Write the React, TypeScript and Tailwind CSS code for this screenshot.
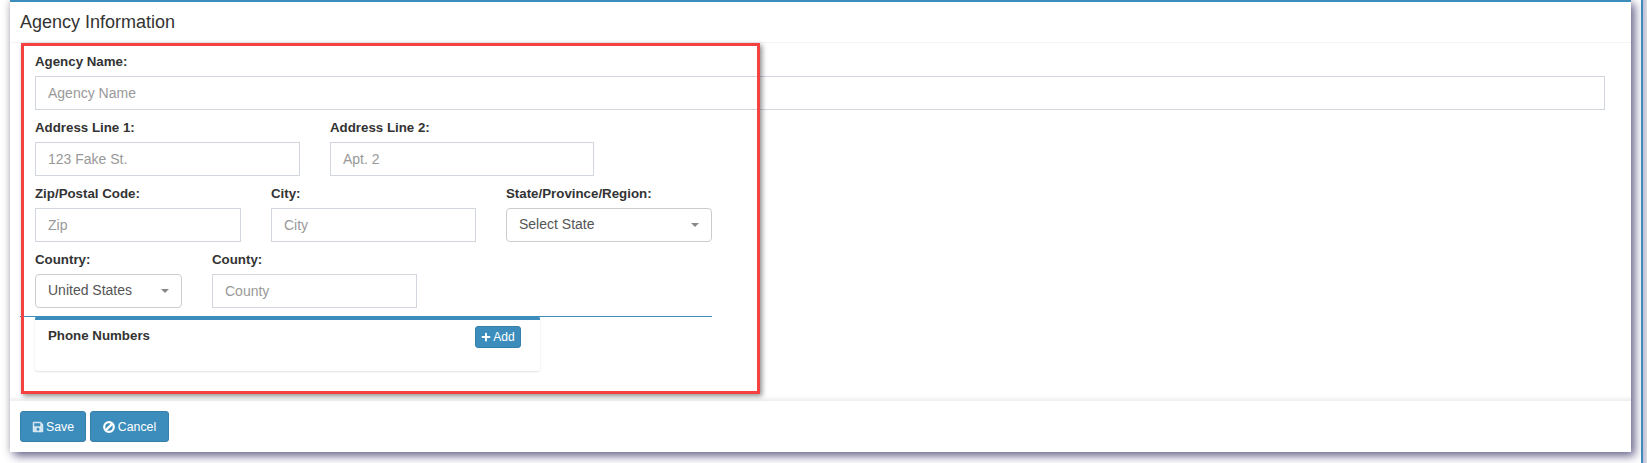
import React from 'react'
import { FaPlus, FaSave } from 'react-icons/fa'

function BanIcon() {
  return (
    <svg viewBox="0 0 12 12" className="size-[12px]" fill="none" stroke="currentColor" strokeWidth="2.2">
      <circle cx="6" cy="6" r="4.8" />
      <path d="M2.6 9.4 9.4 2.6" />
    </svg>
  )
}

function Field({ label, placeholder, className }: { label: string; placeholder: string; className: string }) {
  return (
    <div className={className}>
      <label className="block h-[31px] text-[13.3px] leading-[20px] pt-[7px] font-bold text-[#333]">{label}</label>
      <input
        placeholder={placeholder}
        className="block w-full h-[34px] px-[12px] border border-[#d2d6de] bg-white text-[14px] text-[#555] placeholder:text-[#999] outline-none"
      />
    </div>
  )
}

function SelectField({ label, value, className }: { label: string; value: string; className: string }) {
  return (
    <div className={className}>
      <label className="block h-[31px] text-[13.3px] leading-[20px] pt-[7px] font-bold text-[#333]">{label}</label>
      <div className="flex items-center justify-between h-[34px] pl-[12px] pr-[12px] border border-[#ccc] rounded-[4px] bg-white text-[14px] leading-[30px] text-[#555]">
        <span className="-mt-[2px]">{value}</span>
        <span className="w-0 h-0 border-x-[4px] border-x-transparent border-t-[4px] border-t-[#888]" />
      </div>
    </div>
  )
}

export default function App() {
  return (
    <div className="flex h-[463px] w-full overflow-hidden bg-white font-['Liberation_Sans',Arial,sans-serif]">
      <div className="relative ml-[10px] flex h-[452px] w-[1621px] shrink-0 flex-col border-t-2 border-[#3c8dbc] bg-white shadow-[4px_4px_9px_rgba(75,70,120,0.8),-1px_0_7px_rgba(0,0,0,0.15)]">
        <div className="h-[41px] shrink-0 border-b border-[#f4f4f4] pl-[10px] pt-[8px] text-[18px] leading-[24px] text-[#333]">
          Agency Information
        </div>

        <div className="h-[357px] shrink-0 pl-[25px] pr-[26px] shadow-[inset_0_-5px_5px_-5px_rgba(0,0,0,0.12)]">
          <Field label="Agency Name:" placeholder="Agency Name" className="mt-[2px]" />
          <div className="mt-[1px] flex gap-[30px]">
            <Field label="Address Line 1:" placeholder="123 Fake St." className="w-[265px]" />
            <Field label="Address Line 2:" placeholder="Apt. 2" className="w-[264px]" />
          </div>
          <div className="mt-[1px] flex gap-[30px]">
            <Field label="Zip/Postal Code:" placeholder="Zip" className="w-[206px]" />
            <Field label="City:" placeholder="City" className="w-[205px]" />
            <SelectField label="State/Province/Region:" value="Select State" className="w-[206px]" />
          </div>
          <div className="mt-[1px] flex gap-[30px]">
            <SelectField label="Country:" value="United States" className="w-[147px]" />
            <Field label="County:" placeholder="County" className="w-[205px]" />
          </div>

          <div className="-ml-[15px] mt-[8px] h-px w-[692px] bg-[#3c8dbc]" />
          <div className="-mt-px flex h-[55px] w-[505px] items-start justify-between rounded-[3px] border-t-[4px] border-[#3c8dbc] pl-[13px] pr-[19px] pt-[6px] shadow-[0_1px_2px_rgba(0,0,0,0.12)]">
            <h3 className="mt-[1px] text-[13.3px] leading-[18px] font-bold text-[#333]">Phone Numbers</h3>
            <button className="flex h-[22px] w-[46px] items-center justify-center gap-[2px] rounded-[3px] border border-[#367fa9] bg-[#3c8dbc] text-[12px] text-white">
              <FaPlus className="size-[10px]" />
              Add
            </button>
          </div>
        </div>

        <div className="flex flex-1 gap-[4px] border-t border-[#f0f0f0] pl-[10px] pt-[10px]">
          <button className="flex h-[31px] w-[66px] items-center justify-center gap-[2px] rounded-[3px] border border-[#367fa9] bg-[#3c8dbc] pt-px text-[12.3px] leading-none text-white">
            <FaSave className="size-[12px] text-[#d5e6f1]" />
            Save
          </button>
          <button className="flex h-[31px] w-[79px] items-center justify-center gap-[3px] rounded-[3px] border border-[#367fa9] bg-[#3c8dbc] pt-px text-[12.3px] leading-none text-white">
            <BanIcon />
            Cancel
          </button>
        </div>

        {/* annotation drawn on top of the screenshot */}
        <div className="pointer-events-none absolute left-[11px] top-[41px] h-[351px] w-[739px] border-[3px] border-[#f44242] shadow-[2px_2px_5px_rgba(0,0,0,0.45)]" />
      </div>
      <div className="relative ml-[10px] h-full w-[2px] shrink-0 bg-[#3c8dbc]" />
      <div className="relative h-full flex-1 bg-linear-to-r from-[#bfbed6] to-[#d9d9e8]" />
    </div>
  )
}
